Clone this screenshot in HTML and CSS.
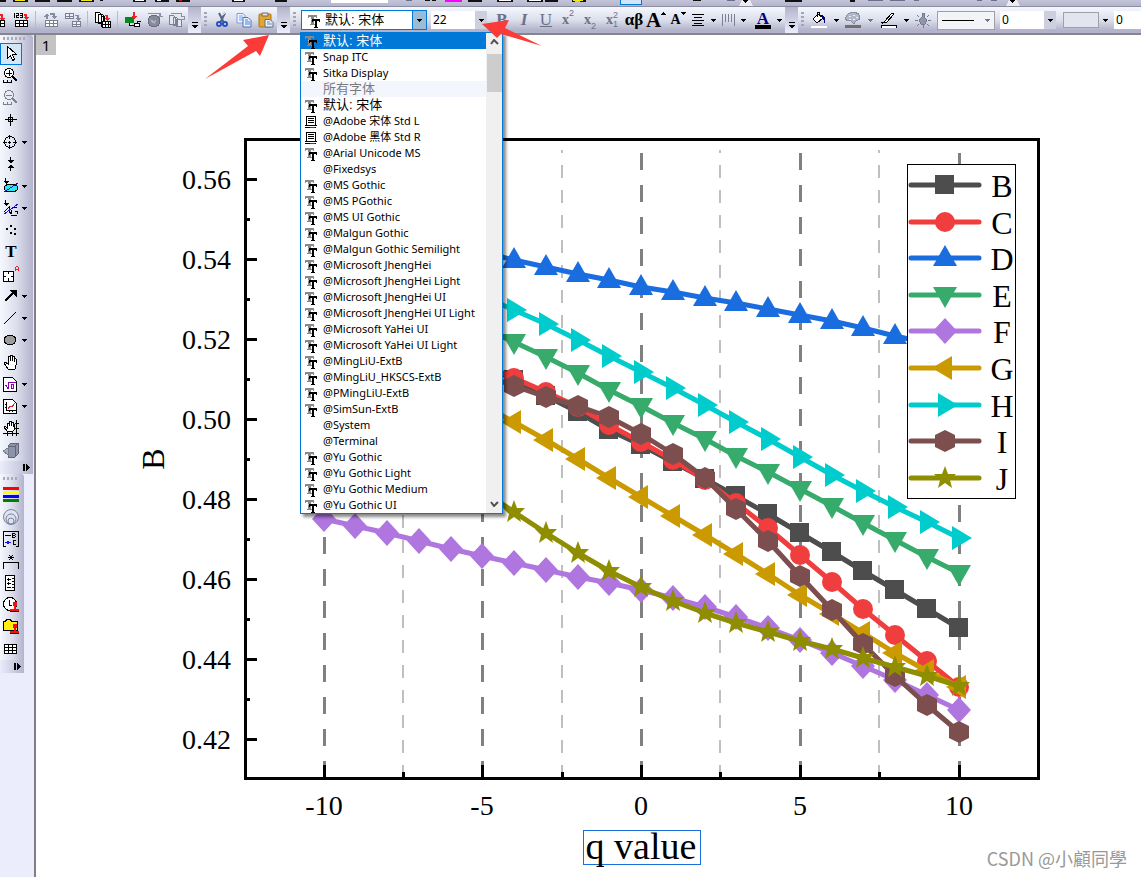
FILE: index.html
```html
<!DOCTYPE html>
<html lang="zh-CN">
<head>
<meta charset="utf-8">
<title>Graph1</title>
<link rel="stylesheet" href="styles.css">
</head>
<body>
<svg class="defs" aria-hidden="true">
  <defs>
    <symbol id="tt" viewBox="0 0 12 13"><path fill="#888" d="M0 0h9v3H8V2H6v7h1v1H2V9h1V2H1v1H0z"/><path fill="#fff" d="M3 4h9v1H3z" opacity=".5"/><path fill="#000" d="M4 4h8v3h-1V6H9v6h1v1H6v-1h1V6H5v1H4z"/></symbol>
    <symbol id="printer" viewBox="0 0 12 13"><path fill="#fff" stroke="#000" d="M1.500.5h9v9h-9z"/><path stroke="#000" d="M3 2.500h6M3 4.500h6M3 6.500h6M0 9.500h12M0 11.500h11"/><path stroke="#e00" d="M5 11.500h5"/></symbol>
    <symbol id="down" viewBox="0 0 5 3"><path d="M0 0h5v1H4v1H3v1H2V2H1V1H0z" fill="currentColor"/></symbol>
    <symbol id="more" viewBox="0 0 6 7"><path d="M0 0h6v1H0zM0 3h6v1H5v1H4v1H2V5H1V4H0z"/></symbol>
    <symbol id="moreh" viewBox="0 0 8 7"><path d="M0 0h2v7H0zM3 0h1v1h1v1h1v1h1v1H6v1H5v1H4v1H3z"/></symbol>
    <symbol id="grid" viewBox="0 0 14 8"><path fill="#fff" d="M0 0h13v7H0z"/><path fill="none" stroke="currentColor" d="M0 .5h13M0 3.500h13M0 6.500h13M.5 0v7M4.500 0v7M8.500 0v7M12.500 0v7"/></symbol>
    <marker id="m-b" markerUnits="userSpaceOnUse" overflow="visible"><path fill="#4d4d4d" d="M-10-10h19v19h-19z"/></marker>
    <marker id="m-c" markerUnits="userSpaceOnUse" overflow="visible"><circle fill="#f03d3d" r="10"/></marker>
    <marker id="m-d" markerUnits="userSpaceOnUse" overflow="visible"><path fill="#1a6ddf" d="M0-13 12 8h-24z"/></marker>
    <marker id="m-e" markerUnits="userSpaceOnUse" overflow="visible"><path fill="#37ab6b" d="M0 13 12-8h-24z"/></marker>
    <marker id="m-f" markerUnits="userSpaceOnUse" overflow="visible"><path fill="#af76df" d="M0-13 12 0 0 13-12 0z"/></marker>
    <marker id="m-g" markerUnits="userSpaceOnUse" overflow="visible"><path fill="#cb9a00" d="M-13 0 7-12v24z"/></marker>
    <marker id="m-h" markerUnits="userSpaceOnUse" overflow="visible"><path fill="#00cccd" d="M13 0-7-12v24z"/></marker>
    <marker id="m-i" markerUnits="userSpaceOnUse" overflow="visible"><path fill="#7d4e4e" d="M0-11 10-6V6L0 11-10 6V-6z"/></marker>
    <marker id="m-j" markerUnits="userSpaceOnUse" overflow="visible"><path fill="#8e8e00" d="M0-12 3-4h8L5 2l2 8-7-5-7 5 2-8-6-6h8z"/></marker>
  </defs>
</svg>

<div class="app">
  <div class="bar-cut" aria-hidden="true">
    <svg width="1141" height="6" shape-rendering="crispEdges">
      <path fill="#111" d="M0 0h6v2H0zM13 0h15v2H13zM35 0h15v2H35zM57 0h15v2H57zM79 0h15v2H79zM100 0h3v1h-3zM133 0h13v2h-13zM155 0h14v2h-14zM176 0h14v2h-14zM232 0h13v2h-13zM275 0h12v2h-12zM425 0h5v1h-5zM432 0h4v1h-4zM468 0h14v2h-14zM497 0h16v2h-16zM527 0h16v2h-16zM545 0h13v2h-13zM572 0h3v2h-3zM580 0h6v2h-6zM693 0h8v1h-8zM785 0h17v2h-17zM850 0h5v2h-5z"/>
      <path fill="#f3ea12" d="M15 0h10v1H15zM81 0h11v1H81zM573 0h10v1h-10z"/>
      <path fill="#fff" d="M135 0h9v1h-9zM157 0h4v1h-4zM234 0h9v1h-9zM331 0h57v3h-57zM499 0h12v1h-12zM529 0h12v1h-12z"/>
      <path fill="#e11" d="M179 0h3v1h-3z"/><path fill="#f0f" d="M445 0h17v2h-17z"/>
      <path fill="#68708a" d="M406 0h6v1h-6zM727 0h8v1h-8zM868 0h15v1h-15zM890 0h15v1h-15zM914 0h5v1h-5zM977 0h5v1h-5zM991 0h6v1h-6z"/>
      <path fill="#d3e6f8" stroke="#0078d7" d="M620.500-2h21v6h-21z"/>
      <path fill="#fff" d="M739 6h14l-3-6h-8zM1006 6h14l-3-6h-8z" opacity=".7"/><path d="M742 0h7l-4 3zM1009 0h7l-4 3z"/>
    </svg>
  </div>

  <header class="toolbar">
    <div class="group first">
      <button class="tb" aria-label="Recalculate"><svg viewBox="0 0 16 16"><path d="M7 2h5v4h3l-4 3-3-3h2V4H7z" fill="#e22"/><use href="#grid" x="1" y="8" width="14" height="8"/></svg></button>
      <button class="tb" aria-label="Renumber"><svg viewBox="0 0 16 16"><path d="M1.500 1v5M3 1.500h2.500v2h-2v2H6M7 1.500h2.500v4H7M7 3.500h2" fill="none" stroke="#000"/><path d="M11 2h3v3h2l-3 3-2-3h1V4h-1z" fill="#e22"/><use href="#grid" x="2" y="8" width="14" height="8"/></svg></button>
      <span class="sep"></span>
      <button class="tb dim" aria-label="Transpose"><svg viewBox="0 0 16 16"><path d="M1 5l3-4 2 3H5v3H3V5zM7 1h5v3h2l-3 3-3-3h2V3H7z" fill="#868b9d"/><use href="#grid" x="2" y="8" width="14" height="8"/></svg></button>
      <button class="tb dim" aria-label="Split"><svg viewBox="0 0 16 16"><path d="M.5 1.500h8v5h-8zM0 4h9M4.500 1v6M7.500 9.500h8v5h-8zM7 12h9M11.500 9v6" fill="#eef" stroke="#7a7f92"/><path d="M10 3h4v3h2l-3 3-2-3h1V4h-2z" fill="#868b9d"/></svg></button>
      <span class="sep"></span>
      <button class="tb" aria-label="Add sheets"><svg viewBox="0 0 16 16"><path d="M.5.5h4l2 2V10h-6zM3.500 2.500h4l1 1v8h-5zM6.500 4.500h3v10h-3z" fill="#fff" stroke="#000"/><path d="M10 3h3v3h2l-3 3-2-3h1V4h-1z" fill="#e22"/><path d="M7.500 9.500h8v6h-8zM7 12.500h9M10.500 9v7M13.500 9v7" fill="#fff" stroke="#000"/></svg></button>
      <span class="sep"></span>
      <button class="tb" aria-label="Connect"><svg viewBox="0 0 16 16"><path d="M0 5h9v6H0z" fill="#078a1c"/><path d="M8 0h2v4h2L9 7 6 4h2z" fill="#e22"/><path d="M4.500 11v2.500H9M9.500 11.500h5v3h-5zM12.500 9v2M16 9.500h-3" fill="#fff" stroke="#000"/></svg></button>
      <button class="tb" aria-label="Web"><svg viewBox="0 0 16 16"><circle cx="7" cy="9" r="6" fill="#858b9b" stroke="#666c7e"/><path d="M3 7l4 2 3-3-2 6-3-1z" fill="#adb2c2"/><path d="M1 1.500h12v3M11 4.500h5M12.500 1v5" fill="none" stroke="#8b90a3"/></svg></button>
      <button class="tb" aria-label="Clone"><svg viewBox="0 0 16 16"><path d="M.5 3.500h4l2 2V12h-6zM4.500 5.500h3l1 1v7h-4zM7.500 7.500h4l1 1v6h-5z" fill="#e4e6f0" stroke="#7b8195"/><path d="M2 1.500h10v3M12 4.500h3v3h-4" fill="none" stroke="#8b90a3"/></svg></button>
      <button class="overflow" aria-label="More"><svg width="6" height="7"><use href="#more"/></svg></button>
    </div>

    <div class="group">
      <span class="grip"></span>
      <button class="tb smooth" aria-label="Cut"><svg viewBox="0 0 16 16"><path d="M5 1l5 10M11 1L6 11" stroke="#526589" stroke-width="2"/><path d="M9 3l2-2" stroke="#dde5f2"/><circle cx="5" cy="12" r="2" fill="#dbe8ff" stroke="#2850c0" stroke-width="2"/><circle cx="11" cy="12" r="2" fill="#dbe8ff" stroke="#2850c0" stroke-width="2"/></svg></button>
      <button class="tb smooth" aria-label="Copy"><svg viewBox="0 0 16 16"><path d="M1 1.500h6l2 2V11H1z" fill="#eef5ff" stroke="#7c9cd0"/><path d="M3 4h4M3 6h5M3 8h5" stroke="#79a2df"/><path d="M7 5.500h5l3 3V15H7z" fill="#e8f2ff" stroke="#4c75b8"/><path d="M9 8h3M9 10h5M9 12h5" stroke="#4d84d4"/></svg></button>
      <button class="tb smooth" aria-label="Paste"><svg viewBox="0 0 16 16"><rect x="1" y="2" width="12" height="13" rx="1" fill="#e2a52e" stroke="#ac7414"/><path d="M4 1h6v3H4z" fill="#dfe2e9" stroke="#766b56"/><path d="M7 7.500h5l3 3V15H7z" fill="#e9f1fb" stroke="#5c6f8b"/><path d="M9 10h3M9 12h5" stroke="#6687b4"/></svg></button>
      <button class="overflow" aria-label="More"><svg width="6" height="7"><use href="#more"/></svg></button>
    </div>

    <div class="group format">
      <span class="grip"></span>
      <div class="combo font-combo">
        <svg class="tt" width="12" height="13"><use href="#tt"/></svg>
        <input class="cjk" value="默认: 宋体" aria-label="Font">
        <button class="drop hot" aria-label="Open font list"><svg width="5" height="3"><use href="#down"/></svg></button>
        <div class="popup">
          <ul class="fonts" role="listbox" aria-label="Fonts">
            <li class="cjk selected" role="option" aria-selected="true"><svg><use href="#tt"/></svg>默认: 宋体</li>
            <li role="option"><svg><use href="#tt"/></svg>Snap ITC</li>
            <li role="option"><svg><use href="#tt"/></svg>Sitka Display</li>
            <li class="cjk heading" role="presentation"><svg></svg>所有字体</li>
            <li class="cjk" role="option"><svg><use href="#tt"/></svg>默认: 宋体</li>
            <li role="option"><svg><use href="#printer"/></svg>@Adobe 宋体 Std L</li>
            <li role="option"><svg><use href="#printer"/></svg>@Adobe 黑体 Std R</li>
            <li role="option"><svg><use href="#tt"/></svg>@Arial Unicode MS</li>
            <li role="option"><svg></svg>@Fixedsys</li>
            <li role="option"><svg><use href="#tt"/></svg>@MS Gothic</li>
            <li role="option"><svg><use href="#tt"/></svg>@MS PGothic</li>
            <li role="option"><svg><use href="#tt"/></svg>@MS UI Gothic</li>
            <li role="option"><svg><use href="#tt"/></svg>@Malgun Gothic</li>
            <li role="option"><svg><use href="#tt"/></svg>@Malgun Gothic Semilight</li>
            <li role="option"><svg><use href="#tt"/></svg>@Microsoft JhengHei</li>
            <li role="option"><svg><use href="#tt"/></svg>@Microsoft JhengHei Light</li>
            <li role="option"><svg><use href="#tt"/></svg>@Microsoft JhengHei UI</li>
            <li role="option"><svg><use href="#tt"/></svg>@Microsoft JhengHei UI Light</li>
            <li role="option"><svg><use href="#tt"/></svg>@Microsoft YaHei UI</li>
            <li role="option"><svg><use href="#tt"/></svg>@Microsoft YaHei UI Light</li>
            <li role="option"><svg><use href="#tt"/></svg>@MingLiU-ExtB</li>
            <li role="option"><svg><use href="#tt"/></svg>@MingLiU_HKSCS-ExtB</li>
            <li role="option"><svg><use href="#tt"/></svg>@PMingLiU-ExtB</li>
            <li role="option"><svg><use href="#tt"/></svg>@SimSun-ExtB</li>
            <li role="option"><svg></svg>@System</li>
            <li role="option"><svg></svg>@Terminal</li>
            <li role="option"><svg><use href="#tt"/></svg>@Yu Gothic</li>
            <li role="option"><svg><use href="#tt"/></svg>@Yu Gothic Light</li>
            <li role="option"><svg><use href="#tt"/></svg>@Yu Gothic Medium</li>
            <li role="option"><svg><use href="#tt"/></svg>@Yu Gothic UI</li>
          </ul>
          <div class="scroll" aria-hidden="true">
            <svg width="9" height="6"><path d="M1 5l3-4 4 4" fill="none" stroke="#505050" stroke-width="2"/></svg>
            <span class="thumb"></span>
            <svg width="9" height="6"><path d="M1 1l3 4 4-4" fill="none" stroke="#505050" stroke-width="2"/></svg>
          </div>
        </div>
      </div>
      <div class="combo size-combo">
        <input value="22" aria-label="Font size">
        <button class="drop" aria-label="Open size list"><svg width="5" height="3"><use href="#down"/></svg></button>
      </div>
      <button class="tb glyph bold">B</button>
      <button class="tb glyph italic">I</button>
      <button class="tb glyph under">U</button>
      <button class="tb glyph small">x<sup>2</sup></button>
      <button class="tb glyph small">x<sub>2</sub></button>
      <button class="tb glyph small">x<span class="stack"><i>2</i><i>1</i></span></button>
      <button class="tb glyph greek">αβ</button>
      <button class="tb glyph big">A<svg width="5" height="3"><path d="M0 3l2-3 3 3z"/></svg></button>
      <button class="tb glyph mid">A<svg width="5" height="3"><path d="M0 0h5L2 3z"/></svg></button>
      <button class="tb slim" aria-label="Align"><svg viewBox="0 0 16 16"><path d="M2 2.500h12M4 5.500h8M2 8.500h12M4 11.500h8M2 13.500h12" stroke="#000"/></svg></button>
      <button class="arrow" aria-label="Align options"><svg width="5" height="3"><use href="#down"/></svg></button>
      <button class="tb slim" aria-label="Spacing"><svg viewBox="0 0 16 16"><path d="M2.500 2v12M5.500 2v8M8.500 2v8M11.500 2v8M14.500 2v12" stroke="#7b7f91"/></svg></button>
      <button class="arrow" aria-label="Spacing options"><svg width="5" height="3"><use href="#down"/></svg></button>
      <button class="tb color" aria-label="Font color">A</button>
      <button class="arrow" aria-label="Font colors"><svg width="5" height="3"><use href="#down"/></svg></button>
      <button class="overflow" aria-label="More"><svg width="6" height="7"><use href="#more"/></svg></button>
    </div>

    <div class="group style">
      <span class="grip"></span>
      <button class="tb" aria-label="Fill"><svg viewBox="0 0 16 16"><path d="M7 2L2 7l4 4 6-5z" fill="#fff" stroke="#000"/><path d="M6.500 5V.5h2V4" fill="none" stroke="#000"/><path d="M10 3c5 0 5 4 4 9l-2-5z" fill="#000080"/><path d="M0 14h16v2H0z" fill="#fff"/></svg></button>
      <button class="arrow" aria-label="Fill colors"><svg width="5" height="3"><use href="#down"/></svg></button>
      <button class="tb" aria-label="Palette"><svg viewBox="0 0 16 16"><path d="M1 5c2-6 13-6 14 0 0 4-4 3-5 5-1 3-3 0-4-1C3 9 0 9 1 5z" fill="#b2b6c7" stroke="#888da0"/><path d="M4 4h2M8 3h2M11 5h2M4 7h2M8 7h2" stroke="#eef"/><path d="M0 13h16v3H0z" fill="#6f6f73"/></svg></button>
      <button class="arrow gray" aria-label="Palettes"><svg width="5" height="3"><use href="#down"/></svg></button>
      <button class="tb pen" aria-label="Line color"><svg viewBox="0 0 16 16"><path d="M4 9l7-8 2 1-7 8-4 1zM0 10.500h5" fill="#fff" stroke="#000"/><path d="M0 13h16v3H0z"/><path d="M1 14h14v2H1z" fill="#fff"/></svg></button>
      <button class="arrow" aria-label="Line colors"><svg width="5" height="3"><use href="#down"/></svg></button>
      <button class="tb" aria-label="Light"><svg viewBox="0 0 16 16"><path d="M7 5V1h2v4l3 3-2 4H6L4 8z" fill="#9096a9" stroke="#747a8f"/><path d="M0 8.500h3M13 8.500h3M2 3l2 2M14 3l-2 2M2 14l2-2M14 14l-2-2M8 13v3" stroke="#747a8f"/></svg></button>
      <button class="line-select" aria-label="Line style"><span></span><svg width="5" height="3"><use href="#down"/></svg></button>
      <div class="combo width-combo"><input value="0" aria-label="Line width"><button class="drop" aria-label="Line widths"><svg width="5" height="3"><use href="#down"/></svg></button></div>
      <button class="pattern" aria-label="Pattern"></button>
      <button class="arrow" aria-label="Patterns"><svg width="5" height="3"><use href="#down"/></svg></button>
      <div class="combo width-combo last"><input value="0" aria-label="Pattern width"><button class="drop" aria-label="Pattern widths"><svg width="5" height="3"><use href="#down"/></svg></button></div>
    </div>
  </header>

  <div class="body">
    <aside class="side">
      <div class="tools">
        <span class="hgrip"></span>
        <div class="tool on"><button class="st" aria-label="Pointer"><svg viewBox="0 0 16 16"><path d="M4.500.5v12l3-3 2 5 2-1-2-5h4z" fill="#fff" stroke="#000"/></svg></button></div>
        <div class="tool"><button class="st" aria-label="Zoom in"><svg viewBox="0 0 16 16"><circle cx="6" cy="5" r="4.500" fill="#fff" stroke="#000"/><path d="M3 5.500h6M6.500 2v6M.5 12v2.500h8V12M4.500 12v2" fill="none" stroke="#000"/><path d="M9 8l5 5" stroke="#000" stroke-width="2"/></svg></button></div>
        <div class="tool"><button class="st" aria-label="Zoom out"><svg viewBox="0 0 16 16"><circle cx="6" cy="5" r="4.500" fill="#e8eaf2" stroke="#7b8093"/><path d="M3 5.500h6M.5 12v2.500h8V12M4.500 12v2" fill="none" stroke="#7b8093"/><path d="M9 8l5 5" stroke="#7b8093" stroke-width="2"/></svg></button></div>
        <div class="tool"><button class="st" aria-label="Reader"><svg viewBox="0 0 16 16"><path d="M7.500 2v12M2 7.500h12M5.500 5.500h4v4h-4z" fill="none" stroke="#000"/></svg></button></div>
        <div class="tool"><button class="st" aria-label="Data reader"><svg viewBox="0 0 16 16"><circle cx="7" cy="8" r="5.500" fill="none" stroke="#000"/><path d="M6.500 1v4M6.500 11v4M0 8.500h4M10 8.500h4M5 8.500h3M6.500 7v3" stroke="#000"/></svg></button><button class="sarrow" aria-label="Reader options"><svg width="5" height="3"><use href="#down"/></svg></button></div>
        <div class="tool"><button class="st" aria-label="Data selector"><svg viewBox="0 0 16 16"><path d="M7 1h1v3h3L8 7H7L4 4h3zM7 15h1v-3h3L8 9H7l-3 3h3z"/></svg></button></div>
        <div class="tool"><button class="st" aria-label="Mask"><svg viewBox="0 0 16 16"><ellipse cx="8" cy="10" rx="7" ry="4" fill="#2ce5ee" stroke="#000"/><path d="M1 14L15 5" stroke="#11c" stroke-width="1"/><path d="M2 0h1v3h3L3 6 0 3h2z"/></svg></button><button class="sarrow" aria-label="Mask options"><svg width="5" height="3"><use href="#down"/></svg></button></div>
        <div class="tool"><button class="st" aria-label="Draw data"><svg viewBox="0 0 16 16"><path d="M2 0h1v3h3L3 6 0 3h2z"/><path d="M1 12l5-5v4l2 3M8.500 14V9.500M14.500 14v-3M8 15.500h6M9 7.500h5M12 11.500h3" fill="none" stroke="#000"/><path d="M1 14L15 4" stroke="#11c"/></svg></button><button class="sarrow" aria-label="Draw data options"><svg width="5" height="3"><use href="#down"/></svg></button></div>
        <div class="tool"><button class="st" aria-label="Points"><svg viewBox="0 0 16 16"><path d="M3 6h2v2H3zM7 3h2v2H7zM11 6h2v2h-2zM7 10h2v2H7zM11 11h2v2h-2z"/></svg></button></div>
        <div class="tool"><button class="st text">T</button></div>
        <div class="tool"><button class="st" aria-label="Annotation"><svg viewBox="0 0 16 16"><path d="M.5 5.500h10v10H.5zM5.500 5v3M5.500 12v4M0 10.500h3M8 10.500h3" fill="#fff" stroke="#000"/><path d="M12.500 5V2l1-1.500h1l1 1.500v3M12 3.500h4" fill="none" stroke="#e22"/></svg></button></div>
        <div class="tool"><button class="st" aria-label="Arrow"><svg viewBox="0 0 16 16"><path d="M2 13L11 4" stroke="#000" stroke-width="2"/><path d="M6 2h8v8z"/></svg></button><button class="sarrow" aria-label="Arrow options"><svg width="5" height="3"><use href="#down"/></svg></button></div>
        <div class="tool"><button class="st" aria-label="Line"><svg viewBox="0 0 16 16"><path d="M1 14L13 2" stroke="#000" stroke-width="1"/></svg></button><button class="sarrow" aria-label="Line options"><svg width="5" height="3"><use href="#down"/></svg></button></div>
        <div class="tool"><button class="st" aria-label="Ellipse"><svg viewBox="0 0 16 16"><ellipse cx="7" cy="8" rx="6" ry="4.500" fill="#9b9b9b" stroke="#000"/></svg></button><button class="sarrow" aria-label="Shape options"><svg width="5" height="3"><use href="#down"/></svg></button></div>
        <div class="tool"><button class="st" aria-label="Pan"><svg viewBox="0 0 16 16"><path d="M5 15L1 9l1-1 3 2V3l2-1v5-6h2v6-5h2v6-4l2 1v6l-1 4z" fill="#fff" stroke="#000"/></svg></button></div>
        <div class="tool"><button class="st" aria-label="Equation"><svg viewBox="0 0 16 16"><path d="M.5 1.500h9l4 4v10H.5z" fill="#fff" stroke="#000"/><path d="M2 9h1l2 4V6.500h8M11 8.500H8v4h2.500v-4V13" fill="none" stroke="#80a"/></svg></button><button class="sarrow" aria-label="Equation options"><svg width="5" height="3"><use href="#down"/></svg></button></div>
        <div class="tool"><button class="st" aria-label="Graph"><svg viewBox="0 0 16 16"><path d="M.5 1.500h9l4 4v10H.5z" fill="#fff" stroke="#000"/><path d="M3.500 4v8.500H13M2 6.500h2M2 9.500h2M6.500 12v2M9.500 12v2" fill="none" stroke="#000"/><path d="M5 11l2-3 2 1 3-4" fill="none" stroke="#e22"/></svg></button><button class="sarrow" aria-label="Graph options"><svg width="5" height="3"><use href="#down"/></svg></button></div>
        <div class="tool"><button class="st" aria-label="Rescale"><svg viewBox="0 0 16 16"><path d="M4 11L1 7l1-1 2 2V3h2v3-5h2v5-4h2v5-3h1v6l-2 2z" fill="#fff" stroke="#000"/><path d="M0 13.500h16M13.500 0v16M12 3.500h4M12 8.500h4M4.500 12v4M9.500 12v4" stroke="#000"/></svg></button></div>
        <div class="tool"><button class="st" aria-label="Rotate 3D"><svg viewBox="0 0 16 16"><path d="M5 4l3-3h7v11l-3 3H5z" fill="#8e94a8" stroke="#62687b"/><path d="M5 4h7v11M12 4l3-3" fill="none" stroke="#62687b"/><path d="M5 6L0 9l5 4z" fill="#a9aec0" stroke="#777d90"/></svg></button></div>
        <button class="hmore" aria-label="More tools"><svg width="8" height="7"><use href="#moreh"/></svg></button>
      </div>
      <div class="tools narrow">
        <span class="hgrip"></span>
        <div class="tool"><button class="st" aria-label="Colors"><svg viewBox="0 0 16 16"><path fill="red" d="M0 0h16v3H0z"/><path fill="#ff0" d="M0 4h16v3H0z"/><path fill="#00f" d="M0 8h16v3H0z"/><path fill="#008000" d="M0 12h16v3H0z"/></svg></button></div>
        <div class="tool smooth"><button class="st" aria-label="Bubble scale"><svg viewBox="0 0 16 16"><g fill="#dfe3f1" stroke="#7d8499"><circle cx="8" cy="8" r="7.500"/><circle cx="8" cy="10" r="5"/><circle cx="8" cy="12" r="3"/></g></svg></button></div>
        <div class="tool"><button class="st" aria-label="Legend"><svg viewBox="0 0 16 16"><path d="M3 15.500H.5V.5h15v15H13" fill="none" stroke="#000"/><path d="M2 4.500h6M9.500 2v5M9 2.500h3M9 4.500h3M9 6.500h3M12.500 3v1M12.500 5v1M13 9.500h-3v4h3" fill="none" stroke="#000"/><path d="M2 11h6v1H2zM4 10h2v3H4z" fill="#11f"/></svg></button></div>
        <div class="tool"><button class="st" aria-label="Asterisk bracket"><svg viewBox="0 0 16 16"><path d="M.5 16V9.500h15V16" fill="none" stroke="#000"/><path d="M5 4.500h6M6 2l4 5M10 2L6 7" stroke="#000"/></svg></button></div>
        <div class="tool"><button class="st" aria-label="Scale"><svg viewBox="0 0 16 16"><path d="M2.500.5h9v15h-9z" fill="#fff" stroke="#000"/><path d="M4 4.500h4M5.500 3v3M4 8.500h4M5.500 7v3M4 12.500h4M9 3.500h2M9 6.500h2M9 9.500h2M9 12.500h2" stroke="#000"/></svg></button></div>
        <div class="tool"><button class="st" aria-label="Time stamp"><svg viewBox="0 0 16 16"><circle cx="7" cy="7" r="6.500" fill="#fff" stroke="#000"/><path d="M6.500 3v5H9" fill="none" stroke="#000"/><path d="M10 5h4v4h-1v3h3v2H7v-2h4V9h-1z" fill="#e11"/><path d="M7 14.500h9" stroke="#000"/></svg></button></div>
        <div class="tool"><button class="st" aria-label="Project stamp"><svg viewBox="0 0 16 16"><path d="M.5 2.500h2l1-2h4l1 2h6v9H.5z" fill="#ffee10" stroke="#000"/><path d="M10 5h4v4h-1v3h3v2H7v-2h4V9h-1z" fill="#e11"/><path d="M7 14.500h9" stroke="#000"/></svg></button></div>
        <div class="tool"><button class="st" aria-label="Table"><svg viewBox="0 0 16 16"><path d="M1.500 3.500h12v9h-12zM5.500 3v10M9.500 3v10M1 6.500h13M1 9.500h13" fill="#fff" stroke="#000"/></svg></button></div>
        <button class="hmore" aria-label="More tools"><svg width="8" height="7"><use href="#moreh"/></svg></button>
      </div>
    </aside>

    <main class="canvas">
      <button class="layer">1</button>
      <svg class="chart" viewBox="36 35 1105 842" role="img" aria-label="B against q value">
        <g class="minor-grid"><path d="M403 778V150M562 778V150M720 778V150M879 778V150"/></g>
        <g class="major-grid"><path d="M324 778V150M482 778V150M641 778V150M800 778V150M959 778V150"/></g>
        <g class="axis">
          <rect x="245" y="139" width="793" height="639"/>
          <path d="M245 179h12M245 259h12M245 339h12M245 419h12M245 499h12M245 579h12M245 659h12M245 739h12"/>
          <path d="M245 219h5M245 299h5M245 379h5M245 459h5M245 539h5M245 619h5M245 699h5"/>
          <path d="M324 778v-13M482 778v-13M641 778v-13M800 778v-13M959 778v-13M403 778v-6M562 778v-6M720 778v-6M879 778v-6"/>
        </g>
        <g class="series">
          <polyline class="s-b" points="482,364 514,380 546,396 578,412 609,430 641,445 673,462 705,479 736,496 768,514 800,533 832,552 863,571 895,590 927,609 959,628"/>
          <polyline class="s-c" points="482,364 514,378 546,392 578,407 609,425 641,442 673,460 705,480 736,503 768,528 800,555 832,582 863,609 895,635 927,661 959,687"/>
          <polyline class="s-d" points="482,252 514,260 546,267 578,274 609,280 641,287 673,292 705,298 736,303 768,309 800,315 832,321 863,328 895,336 927,343 959,350"/>
          <polyline class="s-e" points="482,327 514,342 546,357 578,373 609,390 641,406 673,423 705,439 736,456 768,472 800,489 832,506 863,523 895,540 927,557 959,573"/>
          <polyline class="s-f" points="324,519 355,526 387,533 419,541 451,549 482,556 514,563 546,570 578,577 609,583 641,590 673,598 705,607 736,617 768,628 800,640 832,653 863,666 895,680 927,695 959,710"/>
          <polyline class="s-g" points="482,405 514,422 546,440 578,459 609,478 641,497 673,516 705,535 736,554 768,574 800,595 832,614 863,633 895,653 927,671 959,687"/>
          <polyline class="s-h" points="482,296 514,310 546,324 578,340 609,356 641,372 673,388 705,405 736,422 768,439 800,457 832,475 863,491 895,507 927,522 959,538"/>
          <polyline class="s-i" points="482,374 514,386 546,397 578,406 609,417 641,434 673,454 705,478 736,509 768,541 800,576 832,610 863,644 895,676 927,705 959,732"/>
          <polyline class="s-j" points="482,490 514,512 546,533 578,553 609,571 641,587 673,601 705,613 736,623 768,632 800,641 832,649 863,658 895,667 927,676 959,686"/>
        </g>
        <g class="ticks y">
          <text x="231" y="189">0.56</text><text x="231" y="269">0.54</text><text x="231" y="349">0.52</text><text x="231" y="429">0.50</text><text x="231" y="509">0.48</text><text x="231" y="589">0.46</text><text x="231" y="669">0.44</text><text x="231" y="749">0.42</text>
        </g>
        <g class="ticks x">
          <text x="324" y="815">-10</text><text x="482" y="815">-5</text><text x="641" y="815">0</text><text x="800" y="815">5</text><text x="959" y="815">10</text>
        </g>
        <text class="axis-title" transform="translate(164 459) rotate(-90)">B</text>
        <rect class="title-box" x="583" y="830" width="117" height="34"/>
        <text class="title" x="641" y="859">q value</text>
        <rect class="legend-box" x="907" y="164" width="108" height="334"/>
        <g class="series legend-lines">
          <polyline class="s-b" points="911,185 945,185 979,185"/>
          <polyline class="s-c" points="911,222 945,222 979,222"/>
          <polyline class="s-d" points="911,258 945,258 979,258"/>
          <polyline class="s-e" points="911,295 945,295 979,295"/>
          <polyline class="s-f" points="911,331 945,331 979,331"/>
          <polyline class="s-g" points="911,368 945,368 979,368"/>
          <polyline class="s-h" points="911,405 945,405 979,405"/>
          <polyline class="s-i" points="911,441 945,441 979,441"/>
          <polyline class="s-j" points="911,478 945,478 979,478"/>
        </g>
        <g class="legend-text">
          <text x="1002" y="197">B</text><text x="1002" y="234">C</text><text x="1002" y="270">D</text><text x="1002" y="307">E</text><text x="1002" y="343">F</text><text x="1002" y="380">G</text><text x="1002" y="417">H</text><text x="1002" y="453">I</text><text x="1002" y="490">J</text>
        </g>
      </svg>
      <p class="watermark">CSDN @小顧同學</p>
    </main>
  </div>
  <svg class="notes" width="560" height="90" aria-hidden="true"><path d="M205 79l43-33-5-6 26-5-9 21-4-5zM482 24l27-4-4 8 37 18-41-12-4 4z"/></svg>
</div>
</body>
</html>
```
FILE: styles.css
```css
* { box-sizing: border-box; }

body {
  margin: 0;
  background: #fff;
  font: 11px/16px "Noto Sans", "Noto Sans CJK SC", sans-serif;
  color: #000;
}

button, input {
  margin: 0;
  padding: 0;
  border: 0;
  background: none;
  font: inherit;
  color: inherit;
}

svg { display: block; flex: none; }
.defs { position: absolute; width: 0; height: 0; }

.app {
  position: relative;
  display: flex;
  flex-direction: column;
  height: 100vh;
  overflow: hidden;
}

/* Top bars */
.bar-cut {
  height: 7px;
  overflow: hidden;
  background: linear-gradient(#c4c4da, #b4b4cb);
  border-bottom: 1px solid #8d8da2;
}

.toolbar {
  position: relative;
  z-index: 2;
  display: flex;
  height: 28px;
  background: linear-gradient(#f4f8fe, #dcdfec 50%, #b2b2ca 90%);
  border-bottom: 2px solid #85858f;
}

.group { display: flex; align-items: center; flex: none; }
.first { margin-left: -12px; }
.sep { width: 1px; height: 18px; margin: 0 4px 0 3px; background: #b9b9ca; }

.grip {
  width: 3px;
  height: 16px;
  margin: 0 4px 0 3px;
  background: repeating-linear-gradient(#a5a5b5 0 2px, transparent 2px 4px);
}

.tb {
  display: flex;
  align-items: center;
  justify-content: center;
  width: 22px;
  height: 22px;
  flex: none;
}
.tb > svg { width: 16px; height: 16px; shape-rendering: crispEdges; }
.smooth > svg, .smooth .st > svg { shape-rendering: auto; }
.slim { width: 18px; }
.dim { color: #7a7f92; }
.pen { margin-left: 2px; }

.arrow {
  display: flex;
  align-items: center;
  justify-content: center;
  width: 12px;
  height: 22px;
  flex: none;
}
.gray { color: #777; }

.overflow {
  display: flex;
  align-items: flex-end;
  justify-content: center;
  width: 13px;
  height: 26px;
  padding-bottom: 4px;
  flex: none;
  background: linear-gradient(#b4b4cc, #ebedfc);
}

.glyph {
  position: relative;
  font: bold 17px/20px "Liberation Serif", serif;
  color: #6c7187;
}
.italic { font-style: italic; }
.under { text-decoration: underline; font-weight: normal; }
.small { font-size: 14px; }
.small sup, .small sub, .stack { font: 9px/9px "Liberation Sans", sans-serif; }
.small sup { align-self: flex-start; }
.small sub { align-self: flex-end; }
.stack { display: flex; flex-direction: column; }
.stack i { font-style: normal; }
.greek { font-size: 17px; color: #000; }
.big, .mid { color: #000; }
.big { font-size: 21px; }
.mid { font-size: 14px; }
.big > svg, .mid > svg { width: 5px; height: 3px; align-self: flex-start; margin-top: 3px; }

.color {
  align-items: flex-start;
  width: 16px;
  height: 17px;
  margin: 0 2px 0 6px;
  border-bottom: 4px solid #000;
  font: bold 17px/14px "Liberation Serif", serif;
  color: #000080;
}

/* Combo boxes */
.combo {
  position: relative;
  display: flex;
  align-items: stretch;
  height: 20px;
  flex: none;
  background: #fff;
}
.combo input { flex: 1; min-width: 0; outline: 0; }
.combo > .drop {
  display: flex;
  align-items: center;
  justify-content: center;
  width: 12px;
  background: #cdcfde;
}
.font-combo { width: 126px; margin: 0 4px 0 1px; border: 1px solid #0078d7; }
.font-combo > .tt { margin: 4px 5px 0 6px; }
.font-combo > .hot { width: 14px; background: #9bbcd4; border-left: 1px solid #0078d7; }
.size-combo, .width-combo { width: 56px; height: 18px; padding-left: 2px; font-size: 12px; }
.size-combo { margin-right: 4px; }
.cjk { font: 13px/16px "Liberation Sans", "Noto Sans CJK SC", sans-serif; }
.width-combo { margin: 0 7px 0 5px; }

.line-select {
  display: flex;
  align-items: center;
  justify-content: space-between;
  width: 58px;
  height: 19px;
  margin-left: 3px;
  padding: 0 4px;
  border: 1px solid #a0a0a5;
  background: #f2f4f8;
  color: #777;
  flex: none;
}
.line-select span { width: 32px; height: 1px; background: #000; }
.pattern { width: 36px; height: 16px; border: 1px solid #a0a0a5; background: #e2e4ef; flex: none; }
.last { margin-left: 3px; }

/* Font list */
.popup {
  position: absolute;
  top: 21px;
  left: -2px;
  display: flex;
  width: 203px;
  border: 1px solid #0078d7;
  background: #fff;
  box-shadow: 3px 3px 3px #0007;
}
.fonts { flex: 1; margin: 0; padding: 0; list-style: none; }
.fonts li { display: flex; height: 16px; padding-left: 4px; white-space: pre; }
.fonts li > svg { width: 12px; height: 13px; margin: 3px 6px 0 0; shape-rendering: crispEdges; }
.fonts .selected { background: #0078d7; color: #fff; }
.fonts .heading { background: #f3f6fc; color: #7b7b7b; }
.scroll {
  display: flex;
  flex-direction: column;
  align-items: center;
  width: 16px;
  padding: 6px 0;
  background: #f0f0f0;
}
.thumb { width: 15px; height: 38px; margin: 9px 0 auto; background: #cdcdcd; }

/* Side tools */
.body { display: flex; flex: 1; min-height: 0; }
.side {
  width: 36px;
  flex: none;
  background: #ebedfc;
  border-right: 2px solid #7e7e84;
}
.tools {
  display: flex;
  flex-direction: column;
  width: 33px;
  background: linear-gradient(90deg, #f5f8fe, #dcdeec 50%, #b3b3cd);
  border-radius: 0 3px 3px 0;
}
.narrow { width: 24px; }
.hgrip {
  width: 22px;
  height: 3px;
  margin: 2px 0 3px 3px;
  background: repeating-linear-gradient(90deg, #aaaab8 0 2px, transparent 2px 4px);
}
.narrow .hgrip { width: 15px; margin: 3px 0 4px 3px; }
.tool { display: flex; height: 22px; }
.st {
  display: flex;
  align-items: center;
  justify-content: center;
  width: 22px;
  height: 22px;
}
.st > svg { width: 16px; height: 16px; shape-rendering: crispEdges; }
.on .st { border: 1px solid #0078d7; background: #d3e6f8; }
.text { font: bold 17px/20px "Liberation Serif", serif; }
.sarrow { display: flex; align-items: center; width: 6px; }
.hmore {
  display: flex;
  align-items: center;
  justify-content: flex-end;
  height: 13px;
  padding-right: 2px;
  background: linear-gradient(90deg, #ebedfc, #b4b4cc);
}

/* Graph page */
.canvas { position: relative; flex: 1; min-width: 0; background: #fff; }
.layer {
  position: absolute;
  top: 0;
  left: 0;
  width: 20px;
  height: 20px;
  background: #c3c3c3;
  font: 15px/20px "Noto Sans", sans-serif;
}
.chart { width: 100%; height: 100%; }
.minor-grid { stroke: #bfbfbf; stroke-width: 2; stroke-dasharray: 13 12; }
.major-grid { stroke: #808080; stroke-width: 3; stroke-dasharray: 17 15; }
.minor-grid, .major-grid { fill: none; shape-rendering: crispEdges; }
.axis { fill: none; stroke: #000; stroke-width: 3; shape-rendering: crispEdges; }
.series { fill: none; stroke-width: 5; stroke-linejoin: round; stroke-linecap: round; }
.s-b { stroke: #4d4d4d; marker: url(#m-b); }
.s-c { stroke: #f03d3d; marker: url(#m-c); }
.s-d { stroke: #1a6ddf; marker: url(#m-d); }
.s-e { stroke: #37ab6b; marker: url(#m-e); }
.s-f { stroke: #af76df; marker: url(#m-f); }
.s-g { stroke: #cb9a00; marker: url(#m-g); }
.s-h { stroke: #00cccd; marker: url(#m-h); }
.s-i { stroke: #7d4e4e; marker: url(#m-i); }
.s-j { stroke: #8e8e00; marker: url(#m-j); }
.legend-lines polyline { marker-start: none; marker-end: none; }
.ticks { font: 28px "Liberation Serif", serif; }
.y { text-anchor: end; }
.x, .title, .axis-title, .legend-text { text-anchor: middle; }
.title { font: 38px "Liberation Serif", serif; }
.axis-title, .legend-text { font: 32px "Liberation Serif", serif; }
.title-box { fill: none; stroke: #1a6ddf; shape-rendering: crispEdges; }
.legend-box { fill: #fff; stroke: #000; shape-rendering: crispEdges; }

.watermark {
  position: absolute;
  right: 14px;
  bottom: 8px;
  margin: 0;
  font: 18px/22px "Noto Sans CJK TC", sans-serif;
  color: #999;
}
.notes { position: absolute; top: 0; left: 0; z-index: 3; pointer-events: none; fill: #fb3b38; }
```
